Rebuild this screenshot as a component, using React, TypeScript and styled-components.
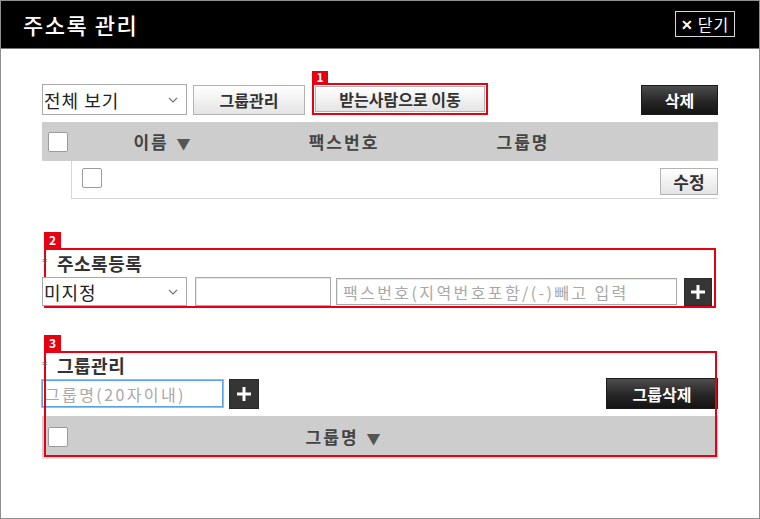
import React from "react";
import styled, { createGlobalStyle, css } from "styled-components";

const Global = createGlobalStyle`
  html, body { margin: 0; padding: 0; background: #fff; }
  body { font-family: "Noto Sans CJK KR", "Noto Sans", sans-serif; }
  * { box-sizing: border-box; }
`;

const Window = styled.div`
  width: 760px;
  height: 519px;
  border: 1px solid #8f8f8f;
  background: #fff;
  display: flex;
  flex-direction: column;
`;

const TitleBar = styled.header`
  height: 48px;
  flex: none;
  background: #000;
  border-bottom: 1px solid #7a7a7a;
  display: flex;
  align-items: center;
  justify-content: space-between;
  padding: 0 24px 2px 22px;
`;

const Title = styled.h1`
  margin: 0;
  color: #fff;
  font-size: 22px;
  font-weight: 500;
  letter-spacing: 1.5px;
`;

const CloseButton = styled.button`
  width: 60px;
  height: 26px;
  border: 1px solid #d8d8d8;
  background: #000;
  color: #fff;
  font-family: inherit;
  font-size: 16px;
  padding: 0;
  display: flex;
  align-items: center;
  justify-content: center;
  gap: 4px;
  letter-spacing: 1px;
  cursor: pointer;
  b { font-size: 14px; font-weight: 700; }
`;

const Content = styled.main`
  padding: 34px 41px 0 41px;
  display: flex;
  flex-direction: column;
`;

const Toolbar = styled.div`
  display: flex;
  align-items: flex-end;
  height: 32px;
`;

const SelectWrap = styled.div<{ $w: number; $h: number }>`
  position: relative;
  width: ${(p) => p.$w}px;
  height: ${(p) => p.$h}px;
  flex: none;
`;

const Select = styled.select`
  appearance: none;
  width: 100%;
  height: 100%;
  border: 1px solid #a9a9a9;
  background: #fff;
  font-family: inherit;
  font-size: 18px;
  color: #222;
  padding: 0 0 0 1px;
  letter-spacing: 1px;
  border-radius: 0;
  outline: none;
`;

const Chevron = styled.svg`
  position: absolute;
  right: 9px;
  top: 50%;
  margin-top: -3px;
  pointer-events: none;
`;

const lightBtn = css`
  background: linear-gradient(#ffffff, #e4e4e4);
  border: 1px solid #b3b3b3;
  color: #333;
  font-family: inherit;
  font-weight: 700;
  padding: 0;
  cursor: pointer;
`;

const LightButton = styled.button<{ $w: number; $h: number; $fs?: number }>`
  ${lightBtn};
  width: ${(p) => p.$w}px;
  height: ${(p) => p.$h}px;
  font-size: ${(p) => p.$fs ?? 16}px;
  flex: none;
`;

const DarkButton = styled.button<{ $w: number; $h: number }>`
  width: ${(p) => p.$w}px;
  height: ${(p) => p.$h}px;
  background: linear-gradient(#4d4d4d, #262626 55%, #141414);
  border: 1px solid #1a1a1a;
  color: #fff;
  font-family: inherit;
  font-weight: 700;
  font-size: 16px;
  padding: 0;
  margin-left: auto;
  flex: none;
  cursor: pointer;
`;

const PlusButton = styled.button<{ $s: number; $ml: number }>`
  width: ${(p) => p.$s}px;
  height: ${(p) => p.$s}px;
  margin-left: ${(p) => p.$ml}px;
  background: #353535;
  border: 1px solid #2a2a2a;
  padding: 0;
  display: flex;
  align-items: center;
  justify-content: center;
  flex: none;
  cursor: pointer;
`;

const Highlight = styled.div`
  position: relative;
  margin-left: 7px;
  border: 2px solid #e60012;
  padding: 1px;
  flex: none;
`;

const Badge = styled.span<{ $h: number; $w: number; $top: number; $left: number }>`
  position: absolute;
  top: ${(p) => p.$top}px;
  left: ${(p) => p.$left}px;
  width: ${(p) => p.$w}px;
  height: ${(p) => p.$h}px;
  background: #e60012;
  color: #fff;
  font-size: 12px;
  font-weight: 700;
  line-height: ${(p) => p.$h}px;
  text-align: center;
`;

const Outline = styled.div<{ $w: number; $h: number }>`
  position: absolute;
  top: 0;
  left: 2px;
  width: ${(p) => p.$w}px;
  height: ${(p) => p.$h}px;
  border: 2px solid #e60012;
  pointer-events: none;
`;

const HeaderRow = styled.div<{ $h: number; $mt: number; $shadow?: boolean }>`
  margin-top: ${(p) => p.$mt}px;
  height: ${(p) => p.$h}px;
  background: #cdcdcd;
  display: flex;
  align-items: center;
  border-bottom: ${(p) => (p.$shadow ? "2px solid #e2e2e2" : "none")};
`;

const CheckCell = styled.div`
  width: 32px;
  padding-left: 6px;
  display: flex;
  align-items: center;
  flex: none;
`;

const Check = styled.input.attrs({ type: "checkbox" })`
  appearance: none;
  width: 20px;
  height: 20px;
  margin: 0;
  background: #fff;
  border: 1px solid #9a9a9a;
  border-radius: 2px;
  flex: none;
`;

const HeadCell = styled.div<{ $w: number }>`
  width: ${(p) => p.$w}px;
  text-align: center;
  font-size: 17px;
  font-weight: 700;
  color: #444;
  letter-spacing: 2px;
  flex: none;
  span { font-size: 14px; color: #555; letter-spacing: 0; margin-left: 2px; }
`;

const DataRow = styled.div`
  margin-left: 29px;
  height: 38px;
  border-left: 1px solid #d6d6d6;
  border-bottom: 1px solid #d6d6d6;
  display: flex;
  align-items: flex-start;
  justify-content: space-between;
  padding: 7px 0 0 10px;
`;

const Section = styled.section<{ $mt: number }>`
  position: relative;
  margin-top: ${(p) => p.$mt}px;
`;

const SectionTitle = styled.h2<{ $h: number }>`
  margin: 0;
  height: ${(p) => p.$h}px;
  display: flex;
  align-items: center;
  font-size: 18px;
  font-weight: 700;
  color: #333;
  letter-spacing: 0.5px;
`;

const Star = styled.span`
  position: relative;
  z-index: 1;
  display: block;
  width: 15px;
  font-family: "DejaVu Sans", sans-serif;
  font-size: 11px;
  font-weight: 400;
  line-height: 11px;
  color: #555;
  align-self: flex-start;
  margin-top: 9px;
`;

const FormRow = styled.div<{ $h: number }>`
  height: ${(p) => p.$h}px;
  display: flex;
  align-items: center;
`;

const TextInput = styled.input<{ $w: number; $h: number; $ml?: number; $focus?: boolean }>`
  width: ${(p) => p.$w}px;
  height: ${(p) => p.$h}px;
  margin-left: ${(p) => p.$ml ?? 0}px;
  border: 1px solid ${(p) => (p.$focus ? "#5aa2e6" : "#a9a9a9")};
  box-shadow: ${(p) => (p.$focus ? "0 0 0 1px #8cc0ef" : "inset 1px 1px 0 #e8e8e8")};
  font-family: inherit;
  font-size: 16px;
  letter-spacing: 2.4px;
  color: #222;
  padding: 0 0 0 ${(p) => (p.$focus ? 2 : 6)}px;
  outline: none;
  flex: none;
  &::placeholder { color: #a8a8a8; }
`;

const Plus = () => (
  <svg width="14" height="14" viewBox="0 0 14 14">
    <rect x="5.5" y="0" width="3" height="14" fill="#fff" />
    <rect x="0" y="5.5" width="14" height="3" fill="#fff" />
  </svg>
);

const ChevronIcon = () => (
  <Chevron width="10" height="6" viewBox="0 0 10 6">
    <path d="M1 1 L5 5 L9 1" fill="none" stroke="#777" strokeWidth="1.2" />
  </Chevron>
);

export default function App() {
  return (
    <>
      <Global />
      <Window>
        <TitleBar>
          <Title>주소록 관리</Title>
          <CloseButton>
            <b>✕</b>닫기
          </CloseButton>
        </TitleBar>
        <Content>
          <Toolbar>
            <SelectWrap $w={145} $h={31}>
              <Select defaultValue="all">
                <option value="all">전체 보기</option>
              </Select>
              <ChevronIcon />
            </SelectWrap>
            <LightButton $w={112} $h={30} style={{ marginLeft: 6 }}>
              그룹관리
            </LightButton>
            <Highlight>
              <Badge $top={-14} $left={-2} $w={16} $h={12}>1</Badge>
              <LightButton $w={170} $h={26}>
                받는사람으로 이동
              </LightButton>
            </Highlight>
            <DarkButton $w={77} $h={30}>삭제</DarkButton>
          </Toolbar>

          <HeaderRow $h={39} $mt={7}>
            <CheckCell>
              <Check />
            </CheckCell>
            <HeadCell $w={176}>
              이름 <span>▼</span>
            </HeadCell>
            <HeadCell $w={188}>팩스번호</HeadCell>
            <HeadCell $w={170}>그룹명</HeadCell>
          </HeaderRow>
          <DataRow>
            <Check />
            <LightButton $w={58} $h={27} $fs={17}>수정</LightButton>
          </DataRow>

          <Section $mt={49}>
            <Outline $w={672} $h={60} />
            <Badge $top={-16} $left={2} $w={17} $h={16}>2</Badge>
            <SectionTitle $h={29}>
              <Star>*</Star>주소록등록
            </SectionTitle>
            <FormRow $h={29}>
              <SelectWrap $w={145} $h={29}>
                <Select defaultValue="none">
                  <option value="none">미지정</option>
                </Select>
                <ChevronIcon />
              </SelectWrap>
              <TextInput $w={136} $h={29} $ml={8} />
              <TextInput $w={341} $h={27} $ml={5} placeholder="팩스번호(지역번호포함/(-)빼고 입력" />
              <PlusButton $s={28} $ml={7}>
                <Plus />
              </PlusButton>
            </FormRow>
          </Section>

          <Section $mt={45}>
            <Outline $w={673} $h={106} />
            <Badge $top={-16} $left={2} $w={17} $h={16}>3</Badge>
            <SectionTitle $h={27}>
              <Star>*</Star>그룹관리
            </SectionTitle>
            <FormRow $h={31}>
              <TextInput $w={181} $h={27} $focus placeholder="그룹명(20자이내)" />
              <PlusButton $s={30} $ml={6}>
                <Plus />
              </PlusButton>
              <DarkButton $w={112} $h={31}>그룹삭제</DarkButton>
            </FormRow>
            <HeaderRow $h={43} $mt={7} $shadow>
              <CheckCell>
                <Check />
              </CheckCell>
              <HeadCell $w={538}>
                그룹명 <span>▼</span>
              </HeadCell>
            </HeaderRow>
          </Section>
        </Content>
      </Window>
    </>
  );
}
